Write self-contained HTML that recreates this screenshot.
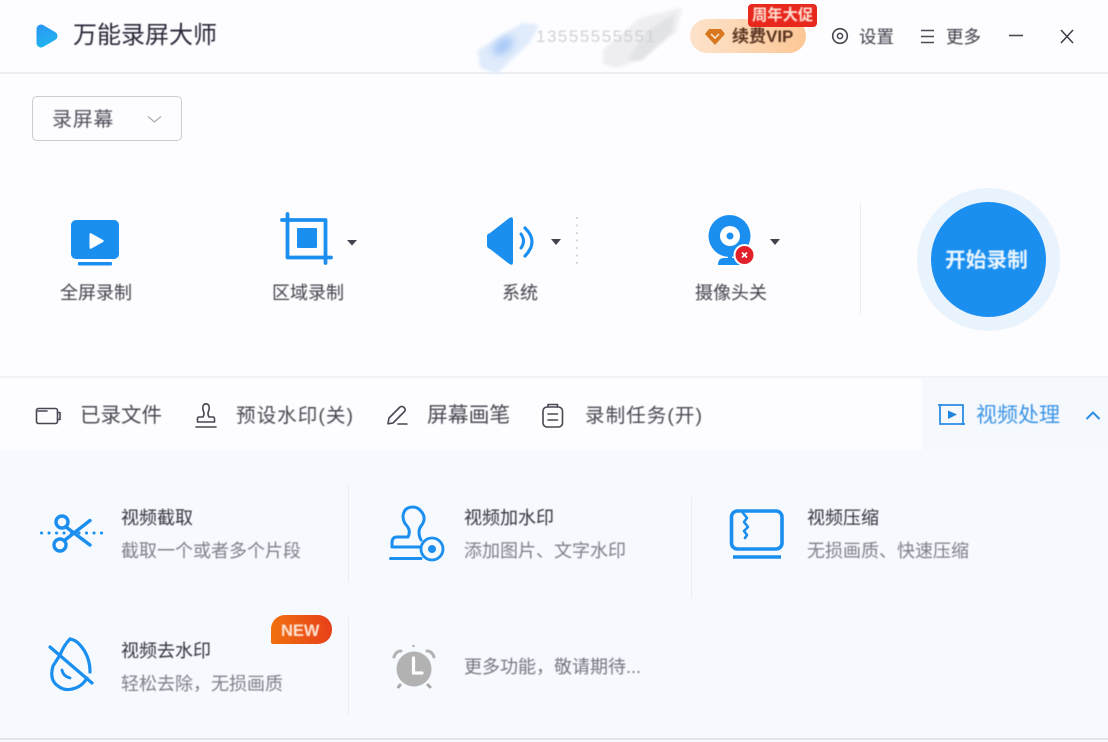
<!DOCTYPE html>
<html lang="zh-CN">
<head>
<meta charset="utf-8">
<title>万能录屏大师</title>
<style>
html,body{margin:0;padding:0}
body{width:1108px;height:742px;overflow:hidden;background:#fff}
#app{position:relative;width:1108px;height:742px;overflow:hidden;background:#fdfdff;font-family:"Liberation Sans","Noto Sans CJK SC",sans-serif;color:#4c4858}
.b{position:absolute}
.t{position:absolute;line-height:30px;height:30px;white-space:nowrap;filter:blur(.45px)}
.nav{font-size:20px;color:#4c4853}
.lab{font-size:18px;color:#45424d}
.h{font-size:18px;color:#37343f}
.s{font-size:18px;color:#807f8a}
svg{position:absolute;left:0;top:0}
</style>
</head>
<body>
<div id="app">
  <!-- backgrounds -->
  <div class="b" style="left:0;top:450px;width:1108px;height:292px;background:#f6f9fe"></div>
  <div class="b" style="left:922px;top:378px;width:186px;height:72px;background:#f5f9fd"></div>
  <div class="b" style="left:0;top:72px;width:1108px;height:2px;background:#eaeef3"></div>
  <div class="b" style="left:0;top:376px;width:1108px;height:2px;background:#f0f2f6"></div>
  <div class="b" style="left:0;top:738px;width:1108px;height:2px;background:#e1e5eb"></div>
  <div class="b" style="left:860px;top:203px;width:1px;height:112px;background:#eceef2"></div>
  <div class="b" style="left:348px;top:484px;width:1px;height:98px;background:#ebeef3"></div>
  <div class="b" style="left:348px;top:617px;width:1px;height:98px;background:#ebeef3"></div>
  <div class="b" style="left:691px;top:497px;width:1px;height:101px;background:#ebeef3"></div>

  <!-- smudges -->
  <svg width="1108" height="90" viewBox="0 0 1108 90" fill="none">
    <defs>
      <filter id="sm" x="-20%" y="-20%" width="140%" height="140%"><feGaussianBlur stdDeviation="1.500"/></filter>
      <filter id="sm2" x="-50%" y="-50%" width="200%" height="200%"><feGaussianBlur stdDeviation="4"/></filter>
    </defs>
    <path d="M478 50L522 23L539 25L530 42L497 74L480 68Z" fill="#e0ebfb" filter="url(#sm)"/>
    <ellipse cx="503" cy="46" rx="12" ry="7" transform="rotate(-40 503 46)" fill="#a8c8f7" filter="url(#sm2)"/>
    <path d="M603 50L640 18L664 12L682 7L676 32L640 60L617 68L603 64Z" fill="#eeeef1" filter="url(#sm)"/>
    <path d="M628 60L646 32L674 14L672 32L642 60Z" fill="#e2e3e6" filter="url(#sm)"/>
  </svg>
  <!-- masked account number over smudges -->
  <div class="t" style="left:536px;top:22px;font-size:17px;color:#d0d2d6;letter-spacing:1.5px">13555555551</div>

  <!-- header text -->
  <div class="t" style="left:73px;top:21px;font-size:24px;color:#2a2537">万能录屏大师</div>
  <div class="b" style="left:690px;top:19px;width:116px;height:34px;border-radius:17px;background:linear-gradient(90deg,#fce3cb,#fdc796)"></div>
  <div class="t" style="left:732px;top:22px;font-size:17px;color:#5a3420;font-weight:700">续费VIP</div>
  <div class="b" style="left:748px;top:4px;width:69px;height:23px;border-radius:4px;background:#e8281c"></div>
  <div class="t" style="left:752px;top:1px;font-size:15.3px;color:#ffe0d4;font-weight:700">周年大促</div>
  <div class="t" style="left:859px;top:22px;font-size:17.5px;color:#3f3c47">设置</div>
  <div class="t" style="left:946px;top:22px;font-size:17.5px;color:#3f3c47">更多</div>

  <!-- dropdown -->
  <div class="b" style="left:32px;top:96px;width:148px;height:43px;border:1px solid #c8cdd6;border-radius:5px;background:#fdfdff"></div>
  <div class="t" style="left:52px;top:105px;font-size:20px;letter-spacing:.7px;color:#54505d">录屏幕</div>

  <!-- main options -->
  <div class="t lab" style="left:60px;top:278px">全屏录制</div>
  <div class="t lab" style="left:272px;top:278px">区域录制</div>
  <div class="t lab" style="left:502px;top:278px">系统</div>
  <div class="t lab" style="left:695px;top:278px">摄像头关</div>

  <!-- start button -->
  <div class="b" style="left:917px;top:188px;width:143px;height:143px;border-radius:50%;background:#e9f3fd"></div>
  <div class="b" style="left:931px;top:202px;width:115px;height:115px;border-radius:50%;background:#1b8ff0"></div>
  <div class="t" style="left:945px;top:246px;font-size:20.7px;font-weight:700;color:#eaf5ff">开始录制</div>

  <!-- toolbar -->
  <div class="t nav" style="left:80px;top:401px;font-size:20.5px">已录文件</div>
  <div class="t nav" style="left:236px;top:401px;font-size:19.6px;letter-spacing:1px">预设水印(关)</div>
  <div class="t nav" style="left:427px;top:401px;font-size:20.8px">屏幕画笔</div>
  <div class="t nav" style="left:585px;top:401px;font-size:19.6px;letter-spacing:1px">录制任务(开)</div>
  <div class="t nav" style="left:976px;top:401px;font-size:21px;color:#3c94e6">视频处理</div>

  <!-- tools -->
  <div class="t h" style="left:121px;top:503px">视频截取</div>
  <div class="t s" style="left:121px;top:536px">截取一个或者多个片段</div>
  <div class="t h" style="left:464px;top:503px">视频加水印</div>
  <div class="t s" style="left:464px;top:536px">添加图片、文字水印</div>
  <div class="t h" style="left:807px;top:503px">视频压缩</div>
  <div class="t s" style="left:807px;top:536px">无损画质、快速压缩</div>
  <div class="t h" style="left:121px;top:636px">视频去水印</div>
  <div class="t s" style="left:121px;top:669px">轻松去除，无损画质</div>
  <div class="t s" style="left:464px;top:652px;color:#777681">更多功能，敬请期待...</div>

  <div class="b" style="left:271px;top:615px;width:61px;height:29px;border-radius:14px 14px 14px 2px;background:linear-gradient(90deg,#f0700f,#e8401a)"></div>
  <div class="t" style="left:281px;top:616px;font-size:16.5px;font-weight:700;color:#ffe3d2">NEW</div>

  <svg width="1108" height="742" viewBox="0 0 1108 742" fill="none" style="filter:blur(.35px)">
    <defs>
      <linearGradient id="lg" gradientUnits="userSpaceOnUse" x1="40" y1="24" x2="48" y2="48"><stop offset="0" stop-color="#2b95f3"/><stop offset="1" stop-color="#1fb6ee"/></linearGradient>
    </defs>
    <!-- logo -->
    <path d="M41 29L53 36L41 43Z" fill="url(#lg)" stroke="url(#lg)" stroke-width="9" stroke-linejoin="round"/>
    <!-- diamond -->
    <path d="M709 29H721L725 34L715 45L705 34Z" fill="#d9771f"/>
    <path d="M711 34L715 38L719 34" stroke="#fde0c4" stroke-width="1.600"/>
    <!-- settings -->
    <circle cx="840" cy="36" r="7.300" stroke="#47444f" stroke-width="1.600"/>
    <circle cx="840" cy="36" r="2.600" stroke="#47444f" stroke-width="1.500"/>
    <!-- menu -->
    <path d="M921 30.500H934M921 36.500H934M921 42.500H934" stroke="#4d4a55" stroke-width="1.500"/>
    <!-- min / close -->
    <path d="M1009 35.500H1023" stroke="#4d4a55" stroke-width="1.600"/>
    <path d="M1061 30L1073 43M1073 30L1061 43" stroke="#3e3b46" stroke-width="1.500"/>
    <!-- dropdown chevron -->
    <path d="M148 116.500L154.500 122L161 116.500" stroke="#a8abb3" stroke-width="1.200"/>

    <!-- fullscreen -->
    <rect x="71" y="220" width="48" height="39" rx="5" fill="#1b8ff0"/>
    <rect x="78" y="262" width="34" height="3.500" rx="1" fill="#1b8ff0"/>
    <path d="M89.500 234.500Q89.500 232.500 91.500 233.500L103 240Q104.500 241 103 242L91.500 248.500Q89.500 249.500 89.500 247.500Z" fill="#fff"/>
    <!-- crop -->
    <path d="M282 220H325.500V263M287.500 214V257.500H331" stroke="#1b8ff0" stroke-width="3.800" stroke-linecap="round" stroke-linejoin="round"/>
    <rect x="297" y="228" width="20" height="20" rx="1" fill="#1b8ff0"/>
    <path d="M347 240H357L352 245.500Z" fill="#45424d"/>
    <!-- speaker -->
    <path d="M487 236Q487 234 490 233L508 219Q513 215 513 220V262Q513 267 508 263L490 249Q487 248 487 245Z" fill="#1b8ff0"/>
    <path d="M521 234Q526 241 521 248" stroke="#1b8ff0" stroke-width="3" stroke-linecap="round"/>
    <path d="M525 228Q539 241.500 525 256" stroke="#1b8ff0" stroke-width="3.200" stroke-linecap="round"/>
    <path d="M551 239H561L556 245Z" fill="#45424d"/>
    <path d="M577 217V265" stroke="#cdd0d8" stroke-width="1.600" stroke-dasharray="2 5.500"/>
    <!-- camera -->
    <circle cx="729.500" cy="236" r="21" fill="#1b8ff0"/>
    <circle cx="730" cy="236" r="10" fill="#fff"/>
    <circle cx="730" cy="236" r="3.500" fill="#1b8ff0"/>
    <rect x="728" y="250" width="4" height="9" fill="#1b8ff0"/>
    <path d="M718 265Q718 258 724 258H736Q741 258 741 265Z" fill="#1b8ff0"/>
    <circle cx="744.500" cy="255" r="11" fill="#fff"/>
    <circle cx="744.500" cy="255" r="9" fill="#e2202a"/>
    <path d="M742 252.500L747 257.500M747 252.500L742 257.500" stroke="#fff" stroke-width="1.600"/>
    <path d="M770 239H780L775 245Z" fill="#45424d"/>

    <!-- toolbar icons -->
    <g stroke="#4a4652" stroke-width="1.600" stroke-linejoin="round" stroke-linecap="round">
      <rect x="36.500" y="408.500" width="21" height="15" rx="2"/>
      <path d="M57.500 412.500H60V419.500H57.500"/>
      <path d="M38 411H47"/>
      <path d="M203 417Q205 414 203 410Q202 404 206 403.800Q210 404 209 410Q207 414 209 417H213Q214.500 417 214.500 419V422H197.500V419Q197.500 417 199 417Z"/>
      <path d="M196 427H216"/>
      <path d="M389 418L400 407Q402.500 405.500 404.500 408Q406 410 404 412L393 423L388 423.800Z"/>
      <path d="M398 424H407"/>
      <rect x="543" y="407" width="19.500" height="20" rx="4"/>
      <path d="M548 407V404.500H557.500V407"/>
      <path d="M548 414H557.500M548 420H557.500"/>
    </g>
    <g stroke="#2b8de4" stroke-width="1.800">
      <path d="M940 405H963V424H940Z"/>
      <path d="M938 405H942M961 424H965"/>
    </g>
    <path d="M948 410.500L957 414.500L948 419Z" fill="#1f86e0"/>
    <path d="M1086.500 419L1093 412.500L1099.500 419" stroke="#2b8de4" stroke-width="2"/>

    <!-- scissors -->
    <g stroke="#1b8ff0" stroke-width="3.400" stroke-linecap="round">
      <circle cx="62" cy="522" r="6"/>
      <circle cx="60" cy="545" r="6"/>
      <path d="M66 527L90 545M65 540L90 520.500"/>
      <path d="M41.500 533H103" stroke-width="3" stroke-dasharray="0.100 7.400"/>
    </g>
    <!-- stamp -->
    <g stroke="#1b8ff0" stroke-width="3" stroke-linecap="round" stroke-linejoin="round">
      <path d="M421 540Q417 532 421 526Q426 520 423 514Q419 507 413 507Q404 507 403 516Q403 522 407 526Q411 531 408 537H397Q392 537 392 543V547H421"/>
      <path d="M390.500 558.500H421" stroke-width="3"/>
      <circle cx="432" cy="549" r="11" stroke-width="2.800"/>
    </g>
    <circle cx="432" cy="549" r="4" fill="#1b8ff0"/>
    <!-- compress -->
    <rect x="731.500" y="511" width="50.500" height="38" rx="6" stroke="#1b8ff0" stroke-width="3.600"/>
    <path d="M743 513L747 518L744 522L748 527L744 531L747 535L745 538" stroke="#1b8ff0" stroke-width="2.600" stroke-linejoin="round" stroke-linecap="round"/>
    <path d="M733 557H781" stroke="#1b8ff0" stroke-width="3.600"/>
    <!-- drop -->
    <g stroke="#1b8ff0" stroke-width="3.200" stroke-linecap="round" stroke-linejoin="round">
      <path d="M70 639Q64 645 60 655L53 666Q49 680 58 686Q64 691 72 689Q82 687 87 678"/>
      <path d="M70 639Q76 640 80 645Q90 656 90 672"/>
      <path d="M50 647L92 683"/>
      <path d="M62 670Q63 676 70 678" stroke-width="2.800"/>
    </g>
    <!-- clock -->
    <circle cx="414" cy="669" r="17.500" fill="#b2b2b2"/>
    <path d="M413.500 658V673H422" stroke="#fff" stroke-width="3.200" stroke-linecap="round" stroke-linejoin="round"/>
    <path d="M394 657Q396 651 401 651M434 657Q432 651 427 651" stroke="#b2b2b2" stroke-width="3" stroke-linecap="round"/>
    <path d="M400 685L398.500 687M428 685L430 687" stroke="#a8a8a8" stroke-width="3" stroke-linecap="round"/>
    <circle cx="413.500" cy="646" r="1.200" fill="#aaa"/>
  </svg>
</div>
</body>
</html>
